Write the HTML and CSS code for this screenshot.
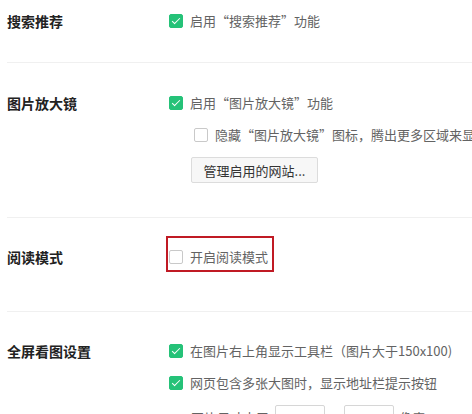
FILE: index.html
```html
<!DOCTYPE html>
<html lang="zh-CN">
<head>
<meta charset="utf-8">
<link rel="stylesheet" href="styles.css">
</head>
<body>
<div class="page">
  <section class="section s1">
    <div class="label">搜索推荐</div>
    <div class="options">
      <label class="row"><span class="cb checked"></span><span class="txt">启用“搜索推荐”功能</span></label>
    </div>
  </section>
  <section class="section s2">
    <div class="label">图片放大镜</div>
    <div class="options">
      <label class="row"><span class="cb checked"></span><span class="txt">启用“图片放大镜”功能</span></label>
      <label class="row sub"><span class="cb"></span><span class="txt">隐藏“图片放大镜”图标，腾出更多区域来显示网页内容</span></label>
      <div class="btnwrap"><button class="btn">管理启用的网站...</button></div>
    </div>
  </section>
  <section class="section s3">
    <div class="label">阅读模式</div>
    <div class="options">
      <label class="row marked"><span class="cb"></span><span class="txt">开启阅读模式</span><span class="mark"></span></label>
    </div>
  </section>
  <section class="section s4">
    <div class="label">全屏看图设置</div>
    <div class="options">
      <label class="row"><span class="cb checked"></span><span class="txt">在图片右上角显示工具栏（图片大于150x100)</span></label>
      <label class="row"><span class="cb checked"></span><span class="txt">网页包含多张大图时，显示地址栏提示按钮</span></label>
      <div class="row size"><span class="txt">图片尺寸大于</span><input class="num" value="400"><span class="txt">x</span><input class="num" value="300"><span class="txt">像素</span></div>
    </div>
  </section>
</div>
</body>
</html>
```

FILE: styles.css
```css
html, body {
  margin: 0;
  padding: 0;
  background: #fff;
  overflow: hidden;
}
body {
  font-family: "Noto Sans CJK SC", "Noto Sans", sans-serif;
  font-size: 13px;
  color: #636363;
}
.page {
  padding-left: 7px;
  width: 600px;
}
.section {
  display: flex;
  align-items: flex-start;
  border-bottom: 1px solid #f0f0f0;
}
.s1 { padding: 11px 0 31px; }
.s2 { padding: 30px 0 34px; }
.s3 { padding: 29px 0 44px; }
.s4 { padding: 29px 0 40px; }
.label {
  width: 162px;
  flex: none;
  font-size: 14px;
  font-weight: bold;
  color: #222;
  line-height: 20px;
}
.options {
  display: flex;
  flex-direction: column;
  gap: 12px;
}
.row {
  display: flex;
  align-items: center;
  height: 20px;
  line-height: 20px;
  white-space: nowrap;
  position: relative;
}
.row.sub { padding-left: 25px; }
.cb {
  width: 14px;
  height: 14px;
  box-sizing: border-box;
  border: 1px solid #c9c9c9;
  border-radius: 2px;
  background: #fff;
  margin-right: 7px;
  flex: none;
  position: relative;
}
.cb.checked {
  background: #25c278;
  border-color: #25c278;
}
.cb.checked::after {
  content: "";
  position: absolute;
  left: 4px;
  top: 1px;
  width: 3px;
  height: 7px;
  border: solid #fff;
  border-width: 0 1.5px 1.5px 0;
  transform: rotate(45deg);
}
.btnwrap { padding-left: 22px; }
.btn {
  font-family: inherit;
  font-size: 13px;
  color: #333;
  height: 26px;
  width: 127px;
  background: #f7f7f7;
  border: 1px solid #dcdcdc;
  border-radius: 2px;
  padding: 0;
}
.marked .mark {
  position: absolute;
  left: -3px;
  top: -11px;
  width: 108px;
  height: 36px;
  box-sizing: border-box;
  border: 2px solid #c01a24;
}
.row.size {
  height: 26px;
  padding-left: 22px;
}
.num {
  width: 50px;
  height: 26px;
  box-sizing: border-box;
  border: 1px solid #d6d6d6;
  border-radius: 2px;
  text-align: center;
  font-family: inherit;
  font-size: 13px;
  color: #333;
  margin: 0 6px;
  padding: 0;
}
```
